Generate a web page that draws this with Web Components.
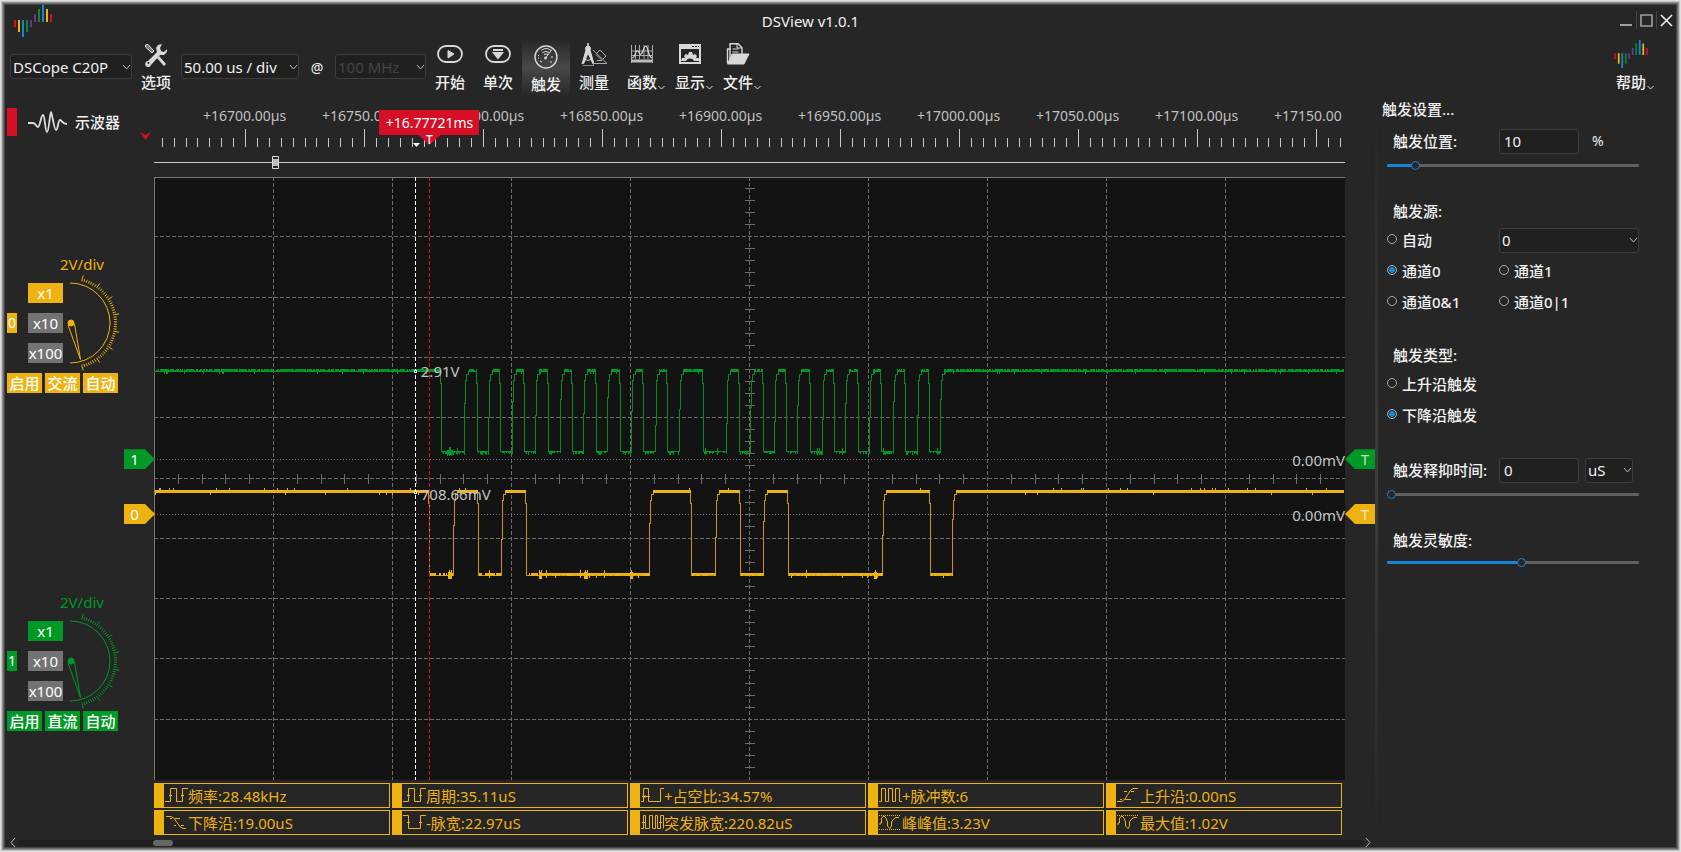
<!DOCTYPE html>
<html lang="zh-CN">
<head>
<meta charset="utf-8">
<title>DSView v1.0.1</title>
<style>
html,body{margin:0;height:100%;background:#262626}
body{font:15px/20px "Noto Sans","Noto Sans CJK SC",sans-serif;color:#f0f0f0;
--bg:#262626;--field:#202020;--line:#3c3c3c;--icon:#d8d8d8;--blue:#1785d6;--green:#009925;--yellow:#eeb211;--red:#d50f25;--grey:#737373}
</style>
</head>
<body>
<ds-window></ds-window>
<script>
const NS='xmlns="http://www.w3.org/2000/svg"';
const CHEVRON=c=>`url("data:image/svg+xml,${encodeURIComponent(`<svg ${NS} width="9" height="6"><path d="M1 1l3.5 4L8 1" fill="none" stroke="${c}"/></svg>`)}")`;
const FIELD_CSS=`
select,input[type=text]{box-sizing:border-box;height:25px;border:1px solid var(--line);border-radius:3px;background-color:var(--field);color:inherit;font:inherit;margin:0;outline:none}
select{appearance:none;padding:0 14px 0 2px;background-image:${CHEVRON('#bbb')};background-repeat:no-repeat;background-position:right 0 center}
select:disabled{color:#444;opacity:1}`;
function define(name,css,html,setup){
  const tpl=document.createElement('template');
  tpl.innerHTML=`<style>:host,*{box-sizing:border-box}${css}</style>${html}`;
  customElements.define(name,class extends HTMLElement{
    constructor(){super();this.attachShadow({mode:'open'}).append(tpl.content.cloneNode(true));}
    connectedCallback(){if(setup&&!this.ready){this.ready=true;setup(this,this.shadowRoot);}}
  });
}
/* repeatable noise for the traces */
function random(seed){return()=>(seed=(seed*16807)%2147483647)/2147483647;}

define('ds-logo',`:host{display:block;width:38px;height:32px}svg{display:block;width:100%;height:100%}`,
`<svg viewBox="0 0 38 32" aria-hidden="true">
<g fill="#d50f25"><path d="M0 15h2v7H0zM36 9h2v8h-2z"/></g><g fill="#eeb211"><path d="M4 15h2v12H4zM32 4h2v13h-2z"/></g>
<g fill="#1785d6"><path d="M8 15h2v17H8zM28 0h2v17h-2z"/></g><g fill="#0a8a28"><path d="M12 15h2v12h-2zM24 4h2v13h-2z"/></g>
<g fill="#6f3198"><path d="M16 15h2v7h-2zM20 9h2v8h-2z"/></g></svg>`);

define('title-bar',`
:host{display:grid;grid-template-columns:1fr auto 1fr;height:32px;align-items:start}
ds-logo{margin-left:9px}
h1{margin:0;font-size:15px;line-height:20px;font-weight:400;padding:6px 60px 0 0}
nav{display:flex;justify-content:flex-end;padding:6px 0 0}
button{width:20px;height:18px;padding:0;border:0;background:none;color:#a0a0a0;border-left:1px solid #444}
button:first-child{border:0}
button:last-child{color:#f0f0f0}
svg{display:block;width:19px;height:18px}`,
`<ds-logo></ds-logo><h1>DSView v1.0.1</h1>
<nav><button aria-label="最小化"><svg fill="none" stroke="currentColor"><path d="M4 14h12" stroke-width="2"/></svg></button>
<button aria-label="最大化"><svg fill="none" stroke="currentColor"><path d="M4 4h11v11H4z" stroke-width="1.6"/></svg></button>
<button aria-label="关闭"><svg fill="none" stroke="currentColor"><path d="M4 4l11 11M15 4L4 15" stroke-width="1.6"/></svg></button></nav>`);

define('tool-button',`
:host{display:block;width:48px;height:59px}
button{position:relative;width:100%;height:100%;padding:5px 0 0;border:0;background:none;color:inherit;font:inherit;font-weight:500;display:flex;flex-direction:column;align-items:center;gap:5px;white-space:nowrap}
:host([active]) button{background:linear-gradient(#262626,#484848 50%,#262626);padding-top:7px}
::slotted(*){display:block;height:24px;flex:none}
svg{position:absolute;right:1px;bottom:7px;display:none}
:host([menu]) svg{display:block}`,
`<button><slot name="icon"></slot><span><slot></slot></span><svg width="7" height="5" fill="none" stroke="#ddd"><path d="M.5 1l3 3 3-3"/></svg></button>`);

define('tool-bar',`
:host{display:flex;align-items:flex-start;height:61px;padding:1px 21px 0 5px}
${FIELD_CSS}
select{margin-top:16px}
.dev{width:122px}.base{width:118px;margin-left:1px}.rate{width:91px}
.at{width:36px;text-align:center;font-size:14px;margin-top:20px}
.grow{flex:1}
tool-button svg{color:var(--icon)}`,
`<select class="dev" aria-label="设备"><option>DSCope C20P</option></select>
<tool-button><svg slot="icon" width="24" height="24" viewBox="0 0 24 24"><path d="M4 1.500L10 8 8 10 1.500 4 1.500 2z" fill="#777" stroke="#e8e8e8"/><path d="M14 14l7 8" stroke="currentColor" stroke-width="2.800"/><path d="M18 1l-4 1-2 3 1 4-9 9a3 3 0 1 0 3 4l9-10 4 0 3-3 0-3-3 3-3-1-1-3z" fill="currentColor"/><circle cx="4.500" cy="20" r="1" fill="#262626"/></svg>选项</tool-button>
<select class="base" aria-label="时基"><option>50.00 us / div</option></select><span class="at">@</span>
<select class="rate" disabled aria-label="采样率"><option>100 MHz</option></select>
<tool-button><svg slot="icon" width="28" height="24" fill="none" stroke="currentColor"><rect x="2" y="3" width="24" height="16" rx="8" stroke-width="1.800"/><path d="M12 7.500l6 3.500-6 4z" fill="currentColor"/></svg>开始</tool-button>
<tool-button><svg slot="icon" width="28" height="24" fill="none" stroke="currentColor"><rect x="2" y="3" width="24" height="16" rx="8" stroke-width="1.800"/><path d="M9 7h10M10 10h8l-4 5z" fill="currentColor" stroke-width="2"/></svg>单次</tool-button>
<tool-button active><svg slot="icon" width="24" height="24" fill="none" stroke="currentColor"><circle cx="12" cy="12" r="11" stroke-width="1.400"/><path d="M7 5.500q5-4 10 0M8.500 7.500q3.500-2 7 0M10 9.500q2-1 4 0M11.500 13L18 4.500"/><circle cx="11.500" cy="13" r="1" fill="currentColor"/><path d="M4 10l1 1M6 16l2 1M17 12h2M16 17h2M4 13h1"/></svg>触发</tool-button>
<tool-button><svg slot="icon" width="28" height="24" fill="none" stroke="currentColor"><path d="M8 0v4" stroke-width="1.500"/><path d="M8 3a2.500 2.500 0 0 1 2 4l4 14-1 0-5-11-4 10-2 1 4-14a2.500 2.500 0 0 1 2-4z" fill="currentColor"/><path d="M4 16q4 3 8 0" /><path d="M13 20.500h14L13 7M17 17.500h5l-6-6M16 11l4-4 6 6-3 3" stroke="#aaa"/><path d="M3 22.500h11" stroke="#888"/></svg>测量</tool-button>
<tool-button menu><svg slot="icon" width="24" height="24" fill="none" stroke="currentColor"><path d="M1.500 2v18M22.500 2v18M5.500 2v14M9.500 2v14M14 2v14M18 2v14M1.500 8h21M1.500 12.500h21" stroke="#aaa"/><path d="M1.500 18h21" stroke-width="3" stroke="#bbb"/><path d="M2 15c3 0 3-6 5-7s2 4 4 3 3-8 5-8 2 11 6 12" stroke-width="1.200"/></svg>函数</tool-button>
<tool-button menu><svg slot="icon" width="24" height="24"><path d="M2 2h20v18H2z" fill="none" stroke="currentColor" stroke-width="2"/><path d="M1 1h22v5H1z" fill="currentColor"/><path d="M14 3.500h2M17 3.500h2M20 3.500h1" stroke="#262626"/><path d="M3 18l1-3 3 0-1-2 2-2 2 1 1-3h3l1 3 2-1 2 2-1 2 3 0 1 3z" fill="currentColor"/><path d="M8 19a4 3.500 0 0 1 8 0z" fill="#262626"/></svg>显示</tool-button>
<tool-button menu><svg slot="icon" width="24" height="24" fill="none" stroke="currentColor"><path d="M4 19V.700h8l4 4v6" stroke-width="1.400"/><path d="M11 0v5h5M6.500 6h6M6.500 9h6"/><path d="M1.500 20V6h3" stroke-width="1.400"/><path d="M1.500 21L6 11h17l-5 10z" fill="currentColor"/></svg>文件</tool-button>
<span class="grow"></span>
<tool-button menu><ds-logo slot="icon" style="width:34px;height:28px;margin:-3px 0 -1px"></ds-logo>帮助</tool-button>`);

define('channel-panel',`
:host{display:block;height:138px;color:var(--c);width:112px;margin-left:2px}
.name{height:28px;line-height:18px;padding-left:53px}
.mid{display:grid;grid-template-columns:10px 35px 1fr;column-gap:11px;height:80px;align-items:center}
button{border:0;padding:0;height:20px;font:inherit;line-height:20px;color:#fff;background:var(--c)}
.idx{width:10px;font-size:14px;text-align:center}
.probes{display:grid;gap:10px}
.probes button+button{background:var(--grey)}
.dial{display:block;width:54px;height:96px;margin:-8px 0 -8px -7px}
.row{display:grid;grid-template-columns:repeat(3,35px);gap:3px;margin-top:10px}
.row button{font-weight:500}`,
`<div class="name">2V/div</div>
<div class="mid"><button class="idx"></button><div class="probes"><button>x1</button><button>x10</button><button>x100</button></div>
<svg class="dial" viewBox="-4 -48 54 96" fill="none" stroke="currentColor"><path d="M-1-40A40 40 0 0 1-1 40"/><circle r="3" fill="currentColor"/><path d="M-3 2L9.500 36.500 3.500 1"/><path class="ticks"/></svg></div>
<div class="row"><button>启用</button><button class="coup"></button><button>自动</button></div>`,
(el,r)=>{
  r.querySelector('.idx').textContent=el.getAttribute('index');
  r.querySelector('.coup').textContent=el.getAttribute('coupling');
  let d='';
  for(let i=0;i<=49;i++){const a=(75.6-i*151.2/49)*Math.PI/180,o=i%7?46:49;
    d+=`M${(43*Math.cos(a)).toFixed(1)} ${(-43*Math.sin(a)).toFixed(1)}L${(o*Math.cos(a)).toFixed(1)} ${(-o*Math.sin(a)).toFixed(1)}`;}
  r.querySelector('.ticks').setAttribute('d',d);
});

define('mode-label',`
:host{display:flex;align-items:center;height:28px;margin:10px 0 0 2px;font-weight:500}
i{width:10px;height:28px;background:var(--red)}
svg{margin:0 8px 0 11px}`,
`<i></i><svg width="39" height="22" fill="none" stroke="#ddd" stroke-width="1.800"><path d="M0 12h5c3 0 3 4 5 4s3-12 5-12 2 17 4 17 3-20 4-20 3 18 5 18 2-10 4-10 2 4 7 4"/></svg><slot></slot>`);

define('time-ruler',`
:host{display:block;position:relative;height:79px;color:#c0c0c0}
.scale{position:absolute;inset:0;width:100%;height:79px}
.labels{display:grid;grid-template-columns:32fr repeat(9,119fr) 88fr;font-size:14px;padding-top:8px}
.labels span{padding-left:17px;min-width:0;white-space:nowrap}
.tag{position:absolute;left:23.13%;top:12px;width:100px;height:25px;line-height:25px;transform:translateX(-50%);background:var(--red);color:#fff;text-align:center;font-size:14px}
.tag i{position:absolute;left:39px;top:25px;width:22px;height:10px;background:var(--red);clip-path:polygon(0 0,100% 0,50% 100%);font:500 12px/10px "Noto Sans",sans-serif}
.home{position:absolute;left:-14px;top:34px}`,
`<div class="labels"><span></span></div>
<svg class="scale" viewBox="0 0 1191 79" preserveAspectRatio="none"><path class="ticks" stroke="#c8c8c8" shape-rendering="crispEdges"/><path d="M0 64.500H1191" stroke="#c8c8c8"/><path d="M259 45h7l-3.500 4z" fill="#fff"/><path d="M118.500 58.500h6v12h-6z" fill="#262626" stroke="#ddd"/><path d="M119 61h5v7h-5z" fill="#bbb"/></svg>
<svg class="home" width="11" height="8"><path d="M0 0l5.500 3L11 0 5.500 8z" fill="#d50f25"/></svg>
<div class="tag">+16.77721ms<i>T</i></div>`,
(el,r)=>{
  const row=r.querySelector('.labels');
  for(let t=16700;t<=17150;t+=50){const s=document.createElement('span');s.textContent=`+${t}.00${t<17150?'µs':''}`;row.append(s);}
  let d='';
  for(let i=-7;i<=98;i++){const x=Math.round(91+i*11.9)+.5;if(x<1189)d+=`M${x} 49V${i%10?40:31}`;}
  r.querySelector('.ticks').setAttribute('d',d);
});

define('level-tag',`
:host{position:absolute;width:31px;height:20px;line-height:20px;background:var(--c);color:#fff;transform:translateY(-50%);font-size:15px;text-align:center}
:host([side=left]){left:-30px;clip-path:polygon(0 0,21px 0,100% 50%,21px 100%,0 100%);padding-right:10px}
:host([side=right]){left:100%;width:30px;clip-path:polygon(100% 0,10px 0,0 50%,10px 100%,100% 100%);padding-left:10px;color:#fffb}`,`<slot></slot>`);

define('scope-plot',`
:host{display:block;position:relative;background:#131313;min-height:300px}
svg{position:absolute;inset:0;width:100%;height:100%}
.t{position:absolute;color:#c4c4c4;transform:translateY(-50%)}
.r{right:0}`,
`<svg viewBox="0 0 1191 603" preserveAspectRatio="none" fill="none" shape-rendering="crispEdges">
<g stroke="#6c6c6c"><path class="cols" stroke-dasharray="4 2"/><path class="rows" stroke-dasharray="4 2"/><path class="axis"/><path d="M0 282.500H1191M0 337.500H1191" stroke-dasharray="1 2"/><path d="M.5 603V.5H1191" stroke="#777"/></g>
<path class="g1" stroke="#078a26"/><path class="g2" stroke="#009925"/><path class="y1" stroke="#c79512"/><path class="y2" stroke="#eeb211"/>
<path d="M261.500 0V603" stroke="#fff" stroke-dasharray="4 2"/><path d="M275.500 0V603" stroke="#d50f25" stroke-dasharray="4 2"/>
<path d="M260.500 193.500h2v2h-2zM260.500 314.500h2v2h-2z" stroke="#fff" fill="#131313"/></svg>
<span class="t" style="left:22.400%;top:32.200%">2.91V</span><span class="t" style="left:22.400%;top:52.500%">708.66mV</span>
<span class="t r" style="top:46.900%">0.00mV</span><span class="t r" style="top:56%">0.00mV</span>
<level-tag side="left" style="--c:var(--green);top:46.800%">1</level-tag><level-tag side="left" style="--c:var(--yellow);top:55.900%">0</level-tag>
<level-tag side="right" style="--c:var(--green);top:46.800%">T</level-tag><level-tag side="right" style="--c:var(--yellow);top:55.900%">T</level-tag>`,
(el,r)=>{
  const set=(c,d)=>r.querySelector(c).setAttribute('d',d);
  let cols='',rows='',axis='';
  for(let i=1;i<10;i++){cols+=`M${Math.round(i*119)+.5} 0V603`;rows+=`M0 ${Math.round(i*60.3)-.5}H1191`;}
  for(let i=1;i<50;i++)if(i%5)axis+=`M590.500 ${Math.round(i*12.06)-.5}h10`;
  for(let i=1;i<50;i++)if(i%5)axis+=`M${Math.round(i*23.8)+.5} 296.500v10`;
  set('.cols',cols);set('.rows',rows);set('.axis',axis);
  /* edges alternate falling / rising, starting from a high level */
  const green=[287,311,323,335,346,359,370,382,394,407,418,430,442,454,466,478,489,502,513,526,549,573,585,597,609,621,632,644,656,669,680,692,704,716,727,740,751,764,775,787];
  const yellow=[275,300,324,348,372,496,537,562,586,610,634,729,776,799];
  function trace(edges,hi,lo,high,low){
    let base=`M0 ${hi+.5}`,noise='',prev=0,up=true;
    [...edges,1190].forEach((x,i,all)=>{
      const start=prev+(up&&i?3:1);
      for(let k=start;k<x;k++)noise+=(up?high:low)(k);
      if(i<all.length-1){
        if(up)base+=`H${x-.5}V${hi+12}H${x+.5}V${lo+.5}`;
        else base+=`H${x-.5}V${(hi+lo)/2+(i*7)%30-15}H${x+.5}V${hi+9}H${x+1.5}V${hi+3}H${x+3}V${hi+.5}`;
      }else base+=`H${x}`;
      prev=x;up=!up;
    });
    return[base,noise];
  }
  const rg=random(77);
  const bar=(x,a,b)=>`M${x+.5} ${a}V${b}`;
  const g=trace(green,194,274,
    x=>{const n=rg();return n<.06?'':bar(x,n<.2?193:192,n>.96?197:195);},
    x=>{const n=rg();if(x>292&&x<299)return bar(x,x==295||x==296?270:273,278+(x%2));return n<.3?'':bar(x,n>.97?271:274,n>.85?278:n>.6?277:276);});
  const ry=random(991);
  const y=trace(yellow,314,398,
    x=>{const n=ry();return bar(x,n>.96?311:313,n<.015?318:316);},
    x=>{const n=ry(),burst=[295,296,386,431,432,477,514,631,721].some(c=>Math.abs(c-x)<2);
      if(burst)return bar(x,395-(x%2)*2,402);
      if(x<385&&n<.35)return '';
      return bar(x,n>.97?393:396,n>.95?401:399-(n<.3?1:0));});
  set('.g1',g[0]);set('.g2',g[1]);set('.y1',y[0]);set('.y2',y[1]);
});

const MEASURE={
 period:'M0 14.500H5.500V1.500H11.500V14.500H17.500V1.500H23M4 8.500h3M5 7.500v2M16 8.500h3M17 7.500v2',
 neg:'M0 1.500H5.500V14.500H17.500V1.500H23M4 8.500h3M16 8.500h3',
 duty:'M0 14.500H2.500V1.500H7.500V14.500H19.500V1.500H23M1 9.500h8M4 8v3',
 count:'M0 14.500H2.500V1.500H6.500V14.500H9.500V1.500H13.500V14.500H16.500V1.500H20.500V14.500H23',
 burst:'M0 14.500H2.500V1.500H4.500V14.500H8.500V1.500H11.500V14.500H14.500V1.500H16.500V14.500H19.500V1.500H22.500V14.500M1 8.500h3M18 8.500h3',
 fall:'M1 2.500H6Q9 3 12 8.500T18 14.500H21M5 4.500h2M10 4.500h5M9 11.500h2M16 11.500h3',
 rise:'M0 14.500H5Q8 13 10.500 8T16 1.500H21M3 12.500h2M8 12.500h6M7 4.500h3M14 4.500h3',
 peak:'M0 1.500h1m1 0h1m1 0h1m1 0h1m1 0h1m1 0h1m1 0h1m1 0h1m1 0h1m1 0h1m1 0h1M0 15.500h1m1 0h1m1 0h1m1 0h1m1 0h1m1 0h1m1 0h1m1 0h1m1 0h1m1 0h1m1 0h1M1 11V9H2.500V4L5 2L7 4L8.500 8V12L11 14.500L12.500 12V8L14.500 5L17 3.500H20',
 max:'M0 1.500h1m1 0h1m1 0h1m1 0h1m1 0h1m1 0h1m1 0h1m1 0h1m1 0h1m1 0h1m1 0h1M1 11V9H2.500V4L5 2L7 4L8.500 8V12L11 14.500L12.500 12V8L14.500 5L17 3.500H20'};
define('measure-cell',`
:host{display:flex;align-items:center;height:25px;border:1px solid var(--yellow);border-left-width:10px;color:var(--yellow);white-space:nowrap;min-width:0;overflow:hidden}
svg{flex:none;margin-left:1px}`,
`<svg width="23" height="17" fill="none" stroke="currentColor"><path/></svg><slot></slot>`,
(el,r)=>r.querySelector('path').setAttribute('d',MEASURE[el.getAttribute('kind')]));

define('measure-grid',`:host{display:grid;grid-template-columns:repeat(5,minmax(0,1fr));gap:2px;padding:3px 3px 3px 0}`,
`<measure-cell kind="period">频率:28.48kHz</measure-cell><measure-cell kind="period">周期:35.11uS</measure-cell><measure-cell kind="duty">+占空比:34.57%</measure-cell><measure-cell kind="count">+脉冲数:6</measure-cell><measure-cell kind="rise">上升沿:0.00nS</measure-cell>
<measure-cell kind="fall">下降沿:19.00uS</measure-cell><measure-cell kind="neg">-脉宽:22.97uS</measure-cell><measure-cell kind="burst">突发脉宽:220.82uS</measure-cell><measure-cell kind="peak">峰峰值:3.23V</measure-cell><measure-cell kind="max">最大值:1.02V</measure-cell>`);

define('scroll-strip',`
:host{display:flex;align-items:center;height:9px;padding:0 4px 0 5px;gap:2px}
button{padding:0;border:0;background:none;width:6px;height:9px}
svg{display:block}
div{flex:1;height:6px;border-radius:3px;background:#1f1f1f}
i{display:block;width:20px;height:6px;border-radius:3px;background:#666;margin-left:10%}`,
`<button aria-label="左"><svg width="6" height="9" fill="none" stroke="#bbb"><path d="M5 0L1 4.500 5 9"/></svg></button><div><i></i></div><button aria-label="右"><svg width="6" height="9" fill="none" stroke="#bbb"><path d="M1 0l4 4.500L1 9"/></svg></button>`);

define('scope-view',`
:host{display:flex;flex-direction:column;flex:1;min-width:0}
main{flex:1;display:grid;grid-template-columns:149px minmax(0,1fr) 30px;grid-template-rows:auto 1fr auto;min-height:0}
.chan{grid-row:2/4;padding-top:78px;display:flex;flex-direction:column;gap:200px}
scope-plot{grid-area:2/2}time-ruler{grid-area:1/2}measure-grid{grid-area:3/2}`,
`<main><mode-label>示波器</mode-label><time-ruler></time-ruler>
<div class="chan"><channel-panel index="0" coupling="交流" style="--c:var(--yellow)"></channel-panel><channel-panel index="1" coupling="直流" style="--c:var(--green)"></channel-panel></div>
<scope-plot></scope-plot><measure-grid></measure-grid></main><scroll-strip></scroll-strip>`);

define('trigger-panel',`
:host{display:block;width:298px;padding:1px 37px 0 9px;font-weight:500}
${FIELD_CSS}
h2{font:inherit;margin:0 0 9px -5px;height:20px}
form{display:grid;gap:29px}
section{display:grid;gap:5px}
.row{display:grid;grid-template-columns:112px 1fr;height:26px;align-items:center;white-space:nowrap}
.cap{padding-left:6px;height:22px;line-height:22px}
.set{display:flex;align-items:center;gap:6px}
input[type=text]{width:80px;padding:0 4px;font-weight:400}
select{font-weight:400}
.set select{width:48px}.wide{width:100%}
.set span{padding-left:7px;font-size:14px;font-weight:400}
.radio{display:flex;align-items:center;gap:5px}
input[type=radio]{appearance:none;margin:0 0 3px;width:10px;height:10px;border:1px solid #aaa;border-radius:50%}
input[type=radio]:checked{background:var(--blue);box-shadow:inset 0 0 0 1px var(--bg)}
input[type=range]{appearance:none;width:100%;height:12px;margin:0;background:none}
input[type=range]::-webkit-slider-runnable-track{height:3px;border-radius:1px;background:linear-gradient(90deg,var(--blue) var(--v),#606060 var(--v))}
input[type=range]::-webkit-slider-thumb{appearance:none;width:9px;height:9px;margin-top:-3px;border:1px solid var(--blue);border-radius:50%;background:var(--bg)}`,
`<h2>触发设置...</h2><form>
<section><div class="row"><label class="cap" for="pos">触发位置:</label><div class="set"><input type="text" id="pos" value="10"><span>%</span></div></div><input type="range" value="10" aria-label="触发位置" style="--v:10%"></section>
<section><div class="cap">触发源:</div>
<div class="row"><label class="radio"><input type="radio" name="src">自动</label><select class="wide" aria-label="通道"><option>0</option></select></div>
<div class="row"><label class="radio"><input type="radio" name="src" checked>通道0</label><label class="radio"><input type="radio" name="src">通道1</label></div>
<div class="row"><label class="radio"><input type="radio" name="src">通道0&amp;1</label><label class="radio"><input type="radio" name="src">通道0|1</label></div></section>
<section><div class="cap">触发类型:</div>
<div class="row"><label class="radio"><input type="radio" name="edge">上升沿触发</label></div>
<div class="row"><label class="radio"><input type="radio" name="edge" checked>下降沿触发</label></div></section>
<section><div class="row"><label class="cap" for="hold">触发释抑时间:</label><div class="set"><input type="text" id="hold" value="0"><select aria-label="单位"><option>uS</option></select></div></div><input type="range" value="0" aria-label="触发释抑时间" style="--v:0%"></section>
<section><label class="cap" for="sens">触发灵敏度:</label><input type="range" id="sens" min="0" max="1000" value="535" style="--v:53%"></section>
</form>`);

define('ds-window',`
:host{display:flex;flex-direction:column;min-height:100vh;padding:5px;background:var(--bg);box-shadow:inset 0 0 0 1px #e0e0e0,inset 0 0 0 2px #c0c0c0,inset 0 0 0 3px #909090,inset 0 0 0 4px #686868,inset 0 0 0 5px #484848}
.work{flex:1;display:flex;min-height:0}
.split{width:3px;margin-top:8px;background:linear-gradient(#262626,#3c3c3c 50%,#262626)}`,
`<title-bar></title-bar><tool-bar></tool-bar><div class="work"><scope-view></scope-view><div class="split"></div><trigger-panel></trigger-panel></div>`);
</script>
</body>
</html>
